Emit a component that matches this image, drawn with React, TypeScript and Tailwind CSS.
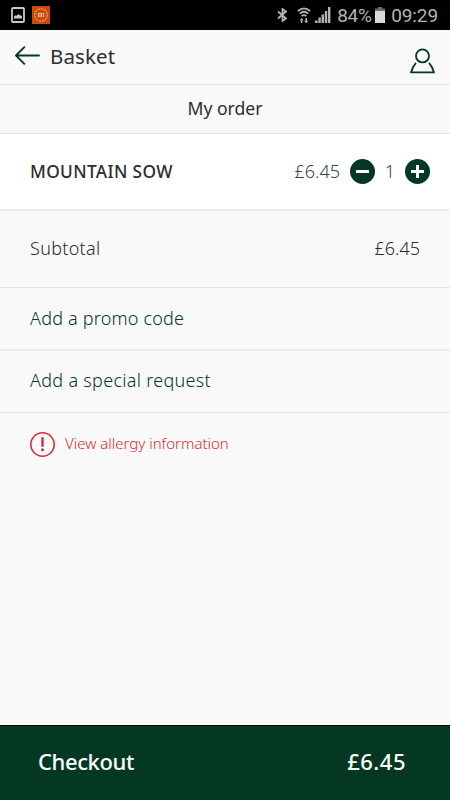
import React, { useState } from "react";

const PRICE = 6.45;

const formatPrice = (value: number) => `£${value.toFixed(2)}`;

const StatusBar: React.FC = () => (
  <div className="flex h-[30px] shrink-0 items-center justify-between bg-black pl-[11px] pr-3 text-[#b4b4b4]">
    <div className="flex items-center gap-[7px]">
      {/* Screenshot notification */}
      <svg width="14" height="16" viewBox="0 0 14 16" fill="none">
        <rect x="1" y="1" width="12" height="14" rx="1" stroke="#c9c9c9" strokeWidth="1.8" />
        <path d="M3 11.5V9.5l1.5-1.3 1 .6L7.5 7l1.5 1.5 1-.3 1 1.3v2z" fill="#c9c9c9" />
      </svg>
      {/* Mi app notification */}
      <svg width="18" height="18" viewBox="0 0 18 18" fill="none">
        <rect width="18" height="18" fill="#cc4a08" />
        <circle cx="9" cy="9" r="6.3" stroke="#eba889" strokeWidth="1" strokeDasharray="2.6 0.6" />
        <path d="M6.5 11V7.5h3V11M8 9v2M11.5 7V11" stroke="#f3c3ab" strokeWidth="1.1" />
      </svg>
    </div>
    <div className="flex items-center font-['Roboto'] text-[19px] leading-none">
      <svg width="11" height="14" viewBox="0 0 11 14" fill="none" stroke="currentColor" strokeWidth="1.8" className="mr-[9px]">
        <path d="M1 3.5l8 7L5.5 13V1L9 3.5l-8 7" />
      </svg>
      <svg width="14" height="17" viewBox="0 0 14 17" fill="none" stroke="currentColor" strokeWidth="1.7" className="mr-[4px]">
        <path d="M.8 4.2Q7-1.6 13.2 4.2M2.8 6.7Q7 2.8 11.2 6.7M4.7 9.1Q7 7 9.3 9.1" />
        <path d="M2.6 13.2L4.6 11l2 2.2H5.4V16H3.8v-2.8zM7 13.8h1.4V11H10v2.8h1.4L9.2 16z" fill="currentColor" stroke="none" />
      </svg>
      <svg width="16" height="16" viewBox="0 0 16 16" fill="currentColor" className="mr-[6px]">
        <rect x="0" y="13.5" width="2.6" height="2.5" />
        <rect x="3.4" y="10.5" width="2.4" height="5.5" />
        <rect x="6.6" y="7.5" width="2.4" height="8.5" />
        <rect x="9.8" y="4" width="2.4" height="12" />
        <rect x="13" y="0" width="2.4" height="16" />
      </svg>
      <span className="w-[34px] whitespace-nowrap tracking-[-0.3px]">84%</span>
      <svg width="10" height="16" viewBox="0 0 10 16" className="ml-[4px] mr-[6px]">
        <path d="M3 0h4v1.5h3V4H0V1.5h3z" fill="#6b6b6b" />
        <rect y="4" width="10" height="12" fill="#dadada" />
      </svg>
      <span className="whitespace-nowrap tracking-[-0.1px]">09:29</span>
    </div>
  </div>
);

const App: React.FC = () => {
  const [quantity, setQuantity] = useState(1);
  const total = formatPrice(PRICE * quantity);

  return (
    <div className="flex h-[800px] w-[450px] flex-col overflow-hidden bg-[#f9f9f9] font-['Noto_Sans',sans-serif] text-[#2d2d2d]">
      <StatusBar />

      {/* Header */}
      <header className="flex h-[55px] shrink-0 items-center border-b border-[#e2e2e2] pl-[15px] pr-[15px] pb-1">
        <button title="Back">
          <svg width="25" height="19" viewBox="0 0 25 19" fill="none" stroke="#053823" strokeWidth="1.9" strokeLinecap="round" strokeLinejoin="round" className="block">
            <path d="M24 9.5H1M9.3 1.2L1 9.5l8.3 8.3" />
          </svg>
        </button>
        <h1 className="ml-[10px] mt-[2px] text-[20.5px] leading-none tracking-[0.1px]">Basket</h1>
        <button title="Account" className="ml-auto">
          <svg width="25" height="26" viewBox="0 0 25 26" fill="none" stroke="#053823" strokeWidth="1.8" strokeLinejoin="round" className="mt-[12px] block">
            <circle cx="12.5" cy="7.9" r="6.5" />
            <path d="M6 14.8Q2.8 18.2 1 24.4h23Q22.2 18.2 19 14.8" />
          </svg>
        </button>
      </header>

      <h2 className="flex h-[49px] shrink-0 items-center justify-center border-b border-[#e2e2e2] pb-[2px] text-[17.6px]">
        My order
      </h2>

      {/* Basket item */}
      <div className="flex h-[77px] shrink-0 items-center border-b-2 border-[#ebebeb] bg-white pl-[30px] pr-5 text-[18px]">
        <span className="text-[17.3px] font-medium tracking-[0.35px]">MOUNTAIN SOW</span>
        <span className="ml-auto font-light text-[#34445c]">{total}</span>
        <button title="Remove one" className="ml-[10px]" onClick={() => setQuantity(Math.max(1, quantity - 1))}>
          <svg width="25" height="25" viewBox="0 0 25 25" className="block">
            <circle cx="12.5" cy="12.5" r="12.5" fill="#053823" />
            <path d="M6 12.5h13" stroke="#fff" strokeWidth="3" />
          </svg>
        </button>
        <span className="w-[30px] text-center font-light text-[#34445c]">{quantity}</span>
        <button title="Add one" onClick={() => setQuantity(quantity + 1)}>
          <svg width="25" height="25" viewBox="0 0 25 25" className="block">
            <circle cx="12.5" cy="12.5" r="12.5" fill="#053823" />
            <path d="M6 12.5h13M12.5 6v13" stroke="#fff" strokeWidth="3" />
          </svg>
        </button>
      </div>

      <div className="flex h-[77px] shrink-0 items-center justify-between border-b border-[#e2e2e2] px-[30px] pb-[2px] text-[18px] font-light">
        <span className="tracking-[0.3px]">Subtotal</span>
        <span>{total}</span>
      </div>

      <button className="flex h-[63px] shrink-0 items-center border-b-2 border-[#ebebeb] px-[30px] text-[18px] font-light tracking-[0.2px] text-[#053823]">
        Add a promo code
      </button>
      <button className="flex h-[62px] shrink-0 items-center border-b border-[#e2e2e2] px-[30px] pb-[2px] text-[18px] font-light tracking-[0.3px] text-[#053823]">
        Add a special request
      </button>

      <button className="flex h-[62px] shrink-0 items-center px-[30px] text-[15px] font-light text-[#d82c34]">
        <svg width="25" height="25" viewBox="0 0 25 25" fill="none" stroke="currentColor" className="mr-[10px]">
          <circle cx="12.5" cy="12.5" r="11.7" strokeWidth="1.6" />
          <path d="M12.5 5.2v9.6" strokeWidth="2.4" />
          <circle cx="12.5" cy="17.8" r="1.5" fill="currentColor" stroke="none" />
        </svg>
        <span className="pb-[2px]">View allergy information</span>
      </button>

      {/* Checkout bar */}
      <button className="mt-auto flex h-[75px] shrink-0 items-center justify-between border-t border-black bg-[#053823] pb-[3px] pl-[38px] pr-11 text-[22px] font-medium text-white">
        <span className="tracking-[-0.4px]">Checkout</span>
        <span className="tracking-[0.5px]">{total}</span>
      </button>
    </div>
  );
};

export default App;
